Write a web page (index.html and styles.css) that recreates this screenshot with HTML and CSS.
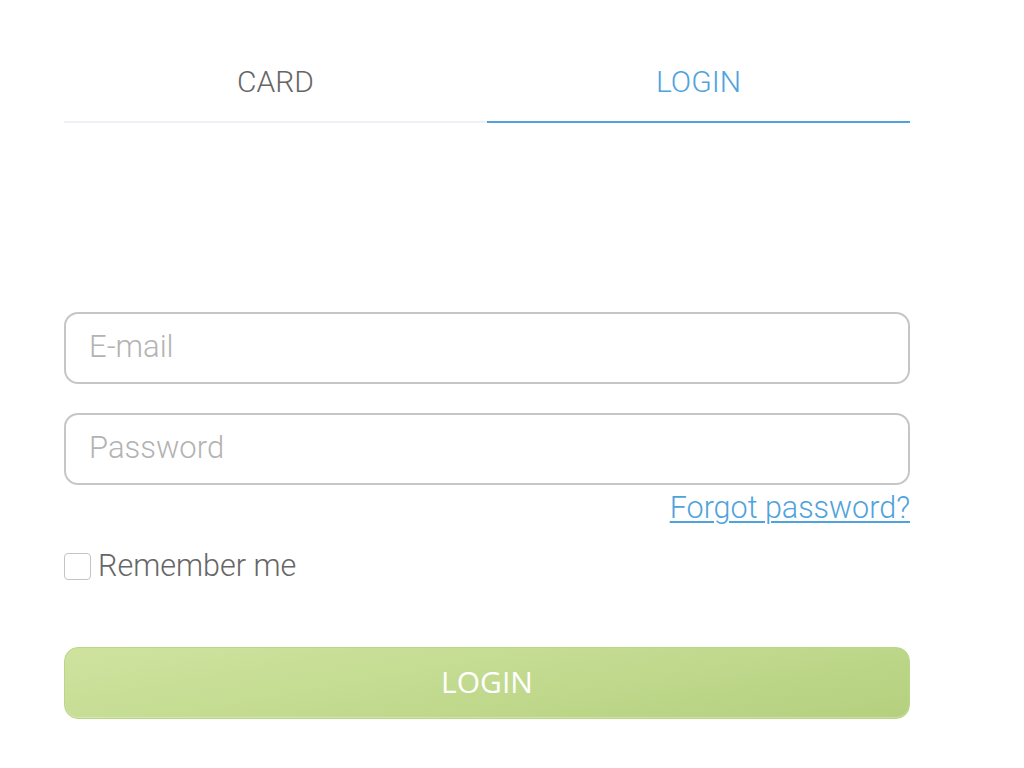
FILE: index.html
```html
<!DOCTYPE html>
<html>
<head>
  <title>Login</title>
  <link rel="stylesheet" href="styles.css">
</head>
<body>

  <div class="wrap">
    <div class="tabs">
      <div class="tab">CARD</div>
      <div class="tab active">LOGIN</div>
    </div>

    <div class="login-form">
      <input type="text" class="field" id="email" placeholder="E-mail" />
      <input type="password" class="field field-pass" id="password" placeholder="Password" />
      <div class="forgot"><a href="#">Forgot password?</a></div>
      <label class="remember">
        <input type="checkbox" id="remember" />
        <span>Remember me</span>
      </label>
      <button class="login-btn">LOGIN</button>
    </div>
  </div>

</body>
</html>
```

FILE: styles.css
```css
body {
  margin: 0;
  background: #fff;
  font-family: Roboto, "Liberation Sans", sans-serif;
  font-weight: 300;
}

.wrap {
  width: 846px;
  margin-left: 64px;
  padding-top: 62px;
}

.tabs {
  display: flex;
}

.tab {
  flex: 1;
  text-align: center;
  font-size: 30px;
  line-height: 40px;
  padding-bottom: 19px;
  color: #666;
  border-bottom: 2px solid #edf1f5;
}

.tab.active {
  color: #4fa3dc;
  border-bottom-color: #4fa3dc;
}

.login-form {
  display: flex;
  flex-direction: column;
  padding-top: 189px;
}

.field {
  box-sizing: border-box;
  height: 72px;
  width: 100%;
  margin: 0;
  padding: 0 23px 3px;
  border: 2px solid #c6c6c6;
  border-radius: 14px;
  background: #fff;
  font-family: Roboto, "Liberation Sans", sans-serif;
  font-weight: 300;
  font-size: 31px;
  color: #555;
  outline: none;
}

.field::placeholder {
  color: #b3b3b3;
}

.field-pass {
  margin-top: 29px;
}

.forgot {
  margin-top: 5px;
  text-align: right;
  font-size: 30.5px;
  line-height: 36px;
}

.forgot a {
  color: #4fa3dc;
  text-decoration: underline;
  text-underline-offset: 3px;
  text-decoration-thickness: 1.5px;
}

.remember {
  display: flex;
  align-items: center;
  margin-top: 22px;
  font-size: 30.5px;
  line-height: 36px;
  color: #666;
}

.remember input {
  appearance: none;
  -webkit-appearance: none;
  box-sizing: border-box;
  width: 27px;
  height: 27px;
  margin: 0 7px 0 0;
  border: 1.5px solid #c4c4c4;
  border-radius: 4px;
  background: #fff;
}

.login-btn {
  box-sizing: border-box;
  margin-top: 63px;
  height: 72px;
  width: 100%;
  padding: 0 0 3px;
  border: 1px solid #bad68a;
  border-radius: 14px;
  background: linear-gradient(170deg, #cfe39f 0%, #c2da8f 50%, #b4d07e 100%);
  box-shadow: inset 0 -1px 1px rgba(255,255,255,0.3);
  color: #fff;
  font-family: "Open Sans", "Noto Sans", sans-serif;
  font-weight: 400;
  font-size: 30px;
  cursor: pointer;
}
```
